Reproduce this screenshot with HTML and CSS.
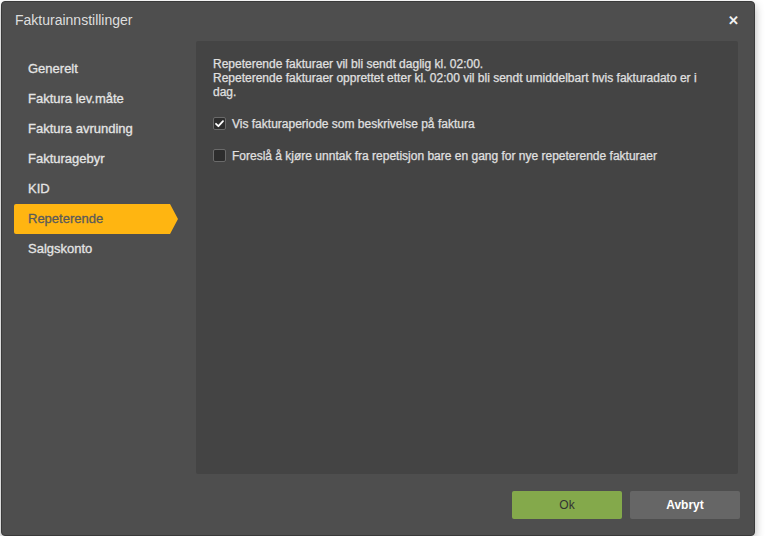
FILE: index.html
```html
<!DOCTYPE html>
<html lang="no">
<head>
<meta charset="utf-8">
<title>Fakturainnstillinger</title>
<link rel="stylesheet" href="styles.css">
</head>
<body>
<div class="dialog">
  <div class="header">
    <span class="title">Fakturainnstillinger</span>
    <span class="close">&#x2715;</span>
  </div>
  <div class="main">
    <ul class="nav">
      <li class="nav-item">Generelt</li>
      <li class="nav-item">Faktura lev.måte</li>
      <li class="nav-item">Faktura avrunding</li>
      <li class="nav-item">Fakturagebyr</li>
      <li class="nav-item">KID</li>
      <li class="nav-item active">Repeterende</li>
      <li class="nav-item">Salgskonto</li>
    </ul>
    <div class="panel">
      <p class="info">Repeterende fakturaer vil bli sendt daglig kl. 02:00.<br>Repeterende fakturaer opprettet etter kl. 02:00 vil bli sendt umiddelbart hvis fakturadato er i dag.</p>
      <label class="check">
        <span class="box checked"><svg viewBox="0 0 13 13" width="13" height="13"><path d="M3 6.8 L5.4 9.2 L10 4.2" fill="none" stroke="#fff" stroke-width="1.8" stroke-linecap="round" stroke-linejoin="round"/></svg></span>
        <span class="check-label">Vis fakturaperiode som beskrivelse på faktura</span>
      </label>
      <label class="check">
        <span class="box"></span>
        <span class="check-label">Foreslå å kjøre unntak fra repetisjon bare en gang for nye repeterende fakturaer</span>
      </label>
    </div>
  </div>
  <div class="footer">
    <button class="btn btn-ok">Ok</button>
    <button class="btn btn-cancel">Avbryt</button>
  </div>
</div>
</body>
</html>
```
FILE: styles.css
```css
html, body {
  margin: 0;
  padding: 0;
  background: #ffffff;
}
body {
  padding: 1px 0 0 1px;
  font-family: "Liberation Sans", Arial, sans-serif;
}
.dialog {
  width: 752px;
  height: 533px;
  background: #4e4e4e;
  border: 1px solid #3a3a3a;
  border-radius: 4px;
  box-shadow: 0 4px 10px rgba(0, 0, 0, 0.3);
  display: flex;
  flex-direction: column;
  color: #e2e2e2;
}
.header {
  height: 39px;
  display: flex;
  align-items: center;
  justify-content: space-between;
  padding: 0 15px 0 13px;
  flex: none;
}
.title {
  font-size: 14px;
  color: #dedede;
  margin-top: -4px;
}
.close {
  font-size: 13px;
  font-weight: bold;
  color: #f2f2f2;
  margin-top: -3px;
}
.main {
  flex: 1;
  display: flex;
  min-height: 0;
}
.nav {
  list-style: none;
  margin: 0;
  padding: 13px 0 0 12px;
  width: 182px;
  flex: none;
}
.nav-item {
  height: 30px;
  line-height: 30px;
  padding-left: 14px;
  width: 142px;
  font-size: 13px;
  color: #e4e4e4;
  -webkit-text-stroke: 0.3px currentColor;
  position: relative;
}
.nav-item.active {
  background: #ffb511;
  color: #5a5a5a;
  border-radius: 2px 0 0 2px;
}
.nav-item.active::after {
  content: "";
  position: absolute;
  right: -8px;
  top: 0;
  border-top: 15px solid transparent;
  border-bottom: 15px solid transparent;
  border-left: 8px solid #ffb511;
}
.panel {
  flex: 1;
  background: #444444;
  margin: 0 16px 17px 0;
  border-radius: 2px;
  padding: 16px 17px;
  font-size: 12px;
  color: #e0e0e0;
  -webkit-text-stroke: 0.25px currentColor;
}
.info {
  margin: 0 0 18px 0;
  line-height: 14px;
}
.check {
  display: flex;
  align-items: center;
  height: 13px;
  margin-bottom: 19px;
}
.box {
  width: 11px;
  height: 11px;
  border: 1px solid #6a6a6a;
  background: #2d2d2d;
  border-radius: 2px;
  flex: none;
  margin-right: 6px;
  display: flex;
  align-items: center;
  justify-content: center;
  -webkit-text-stroke: 0;
}
.box svg {
  display: block;
  flex: none;
}
.footer {
  height: 44px;
  flex: none;
  display: flex;
  justify-content: flex-end;
  align-items: flex-start;
  gap: 8px;
  padding-right: 14px;
}
.btn {
  width: 110px;
  height: 28px;
  border: none;
  border-radius: 2px;
  font-family: "Liberation Sans", Arial, sans-serif;
  font-size: 12px;
  cursor: pointer;
}
.btn-ok {
  background: #84a94b;
  color: #333333;
}
.btn-cancel {
  background: #666666;
  color: #ffffff;
  font-weight: bold;
}
```
